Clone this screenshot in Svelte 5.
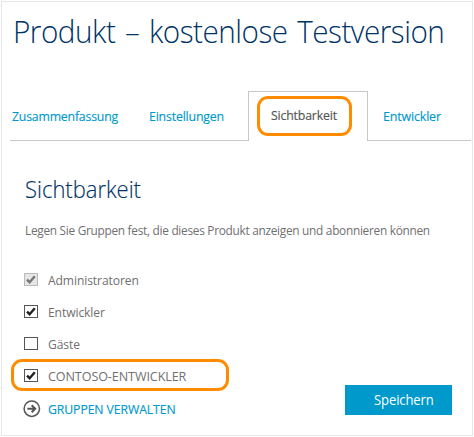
<script>
  const tabs = [
    { label: 'Zusammenfassung', key: 'summary' },
    { label: 'Einstellungen', key: 'settings' },
    { label: 'Sichtbarkeit', key: 'visibility', active: true },
    { label: 'Entwickler', key: 'developers' }
  ];
  const groups = [
    { label: 'Administratoren', key: 'admins', checked: true, disabled: true },
    { label: 'Entwickler', key: 'devs', checked: true },
    { label: 'Gäste', key: 'guests', checked: false },
    { label: 'CONTOSO-ENTWICKLER', key: 'contoso', checked: true, marked: true }
  ];
</script>

<main class="frame">
  <h1><span>Produkt – kostenlose Testversion</span></h1>
  <nav>
    {#each tabs as tab}
      <div class="tab {tab.key}">
        <span>{tab.label}</span>
        {#if tab.active}<i class="mark"></i>{/if}
      </div>
    {/each}
  </nav>
  <section>
    <h2><span>Sichtbarkeit</span></h2>
    <p><span>Legen Sie Gruppen fest, die dieses Produkt anzeigen und abonnieren können</span></p>
    <div class="groups">
      {#each groups as group}
        <div class="row" class:disabled={group.disabled}>
          <svg class="box" width="14" height="14" viewBox="0 0 14 14">
            <rect x="0.5" y="0.5" width="13" height="12" />
            {#if group.checked}<path d="M3 6.6 L5.6 9.2 L10.8 3.2" />{/if}
          </svg>
          <span class={group.key}>{group.label}</span>
          {#if group.marked}<i class="mark"></i>{/if}
        </div>
      {/each}
      <div class="row link">
        <svg class="arrow" width="18" height="18" viewBox="0 0 18 18">
          <circle cx="8.8" cy="8.7" r="7.7" />
          <path d="M4.4 8.7 H12.2 M8.7 5.2 L12.2 8.7 L8.7 12.2" />
        </svg>
        <span class="manage">GRUPPEN VERWALTEN</span>
      </div>
    </div>
  </section>
  <button><span>Speichern</span></button>
</main>

<style>
  :global(body) { display: flow-root; background: #fff; }
  .frame {
    position: relative;
    box-sizing: border-box;
    width: 472px;
    height: 435px;
    margin: 1px;
    border: 1px solid #e6e6e6;
    font-family: 'Open Sans', 'Noto Sans', sans-serif;
    font-size: 13px;
    color: #707070;
    white-space: nowrap;
    overflow: hidden;
  }
  span { display: inline-block; transform: scaleX(0.95); transform-origin: left center; }
  h1, h2, p { margin: 0; font-weight: 300; }
  h1 { padding: 6px 0 0 11px; font-size: 31.5px; line-height: 46px; letter-spacing: -0.5px; word-spacing: 2.5px; color: #003366; }
  h1 span { transform: scaleX(0.941); }
  nav {
    display: flex;
    box-sizing: border-box;
    height: 50px;
    margin: 37px 1px 0 8px;
    box-shadow: inset 0 -1px #c8c8c8;
    color: #0099cc;
  }
  .tab { position: relative; box-sizing: border-box; line-height: 50px; letter-spacing: -0.2px; -webkit-text-stroke: 0.15px; }
  .summary { width: 138px; padding-left: 2px; }
  .summary span { transform: scaleX(0.945); }
  .settings { width: 100px; padding-left: 1px; }
  .visibility { width: 120px; padding-left: 22px; border: 1px solid #c8c8c8; border-bottom: 0; background: #fff; line-height: 47px; color: #555; }
  .developers { padding-left: 15px; }
  .developers span { transform: scaleX(0.962); }
  .mark { position: absolute; box-sizing: border-box; border: 3px solid #ff8c00; border-radius: 11px; }
  .tab .mark { left: 8px; top: 4px; width: 95px; height: 40px; }
  section { padding: 30px 0 0 22px; }
  h2 { padding-left: 1px; font-size: 23px; line-height: 36px; color: #003366; -webkit-text-stroke: 0.15px; }
  h2 span { transform: scaleX(0.955); }
  p { margin-top: 14px; padding-left: 1px; line-height: 20px; font-size: 12.5px; font-weight: 400; letter-spacing: -0.3px; color: #707070; }
  p span { transform: scaleX(0.948); }
  .groups { margin-top: 23px; }
  .row { position: relative; display: flex; align-items: center; height: 32px; letter-spacing: -0.1px; }
  .row span { margin-left: 10px; transform: scaleX(0.93); }
  .row .contoso { transform: scaleX(0.967); }
  .box { fill: #fff; stroke: #555; }
  .box path { fill: none; stroke: #222; stroke-width: 2.4; }
  .disabled .box { fill: #e6e6e6; stroke: #bbb; }
  .disabled .box path { stroke: #777; }
  .row .mark { left: -13px; top: -1px; width: 218px; height: 32px; }
  .arrow { margin-left: -1px; fill: none; stroke: #555; stroke-width: 1.5; }
  .arrow path { stroke-width: 2; }
  .link { height: 33px; color: #0099cc; -webkit-text-stroke: 0.15px; }
  .row .manage { margin-left: 7px; transform: scaleX(0.942); }
  button {
    position: absolute;
    left: 343px;
    top: 383px;
    width: 107px;
    height: 30px;
    padding: 0 0 2px 29px;
    border: 0;
    background: #0099cc;
    color: #fff;
    font: 14px 'Open Sans', 'Noto Sans', sans-serif;
    letter-spacing: -0.1px;
    text-align: left;
  }
  button span { transform: scaleX(0.93); }
</style>
